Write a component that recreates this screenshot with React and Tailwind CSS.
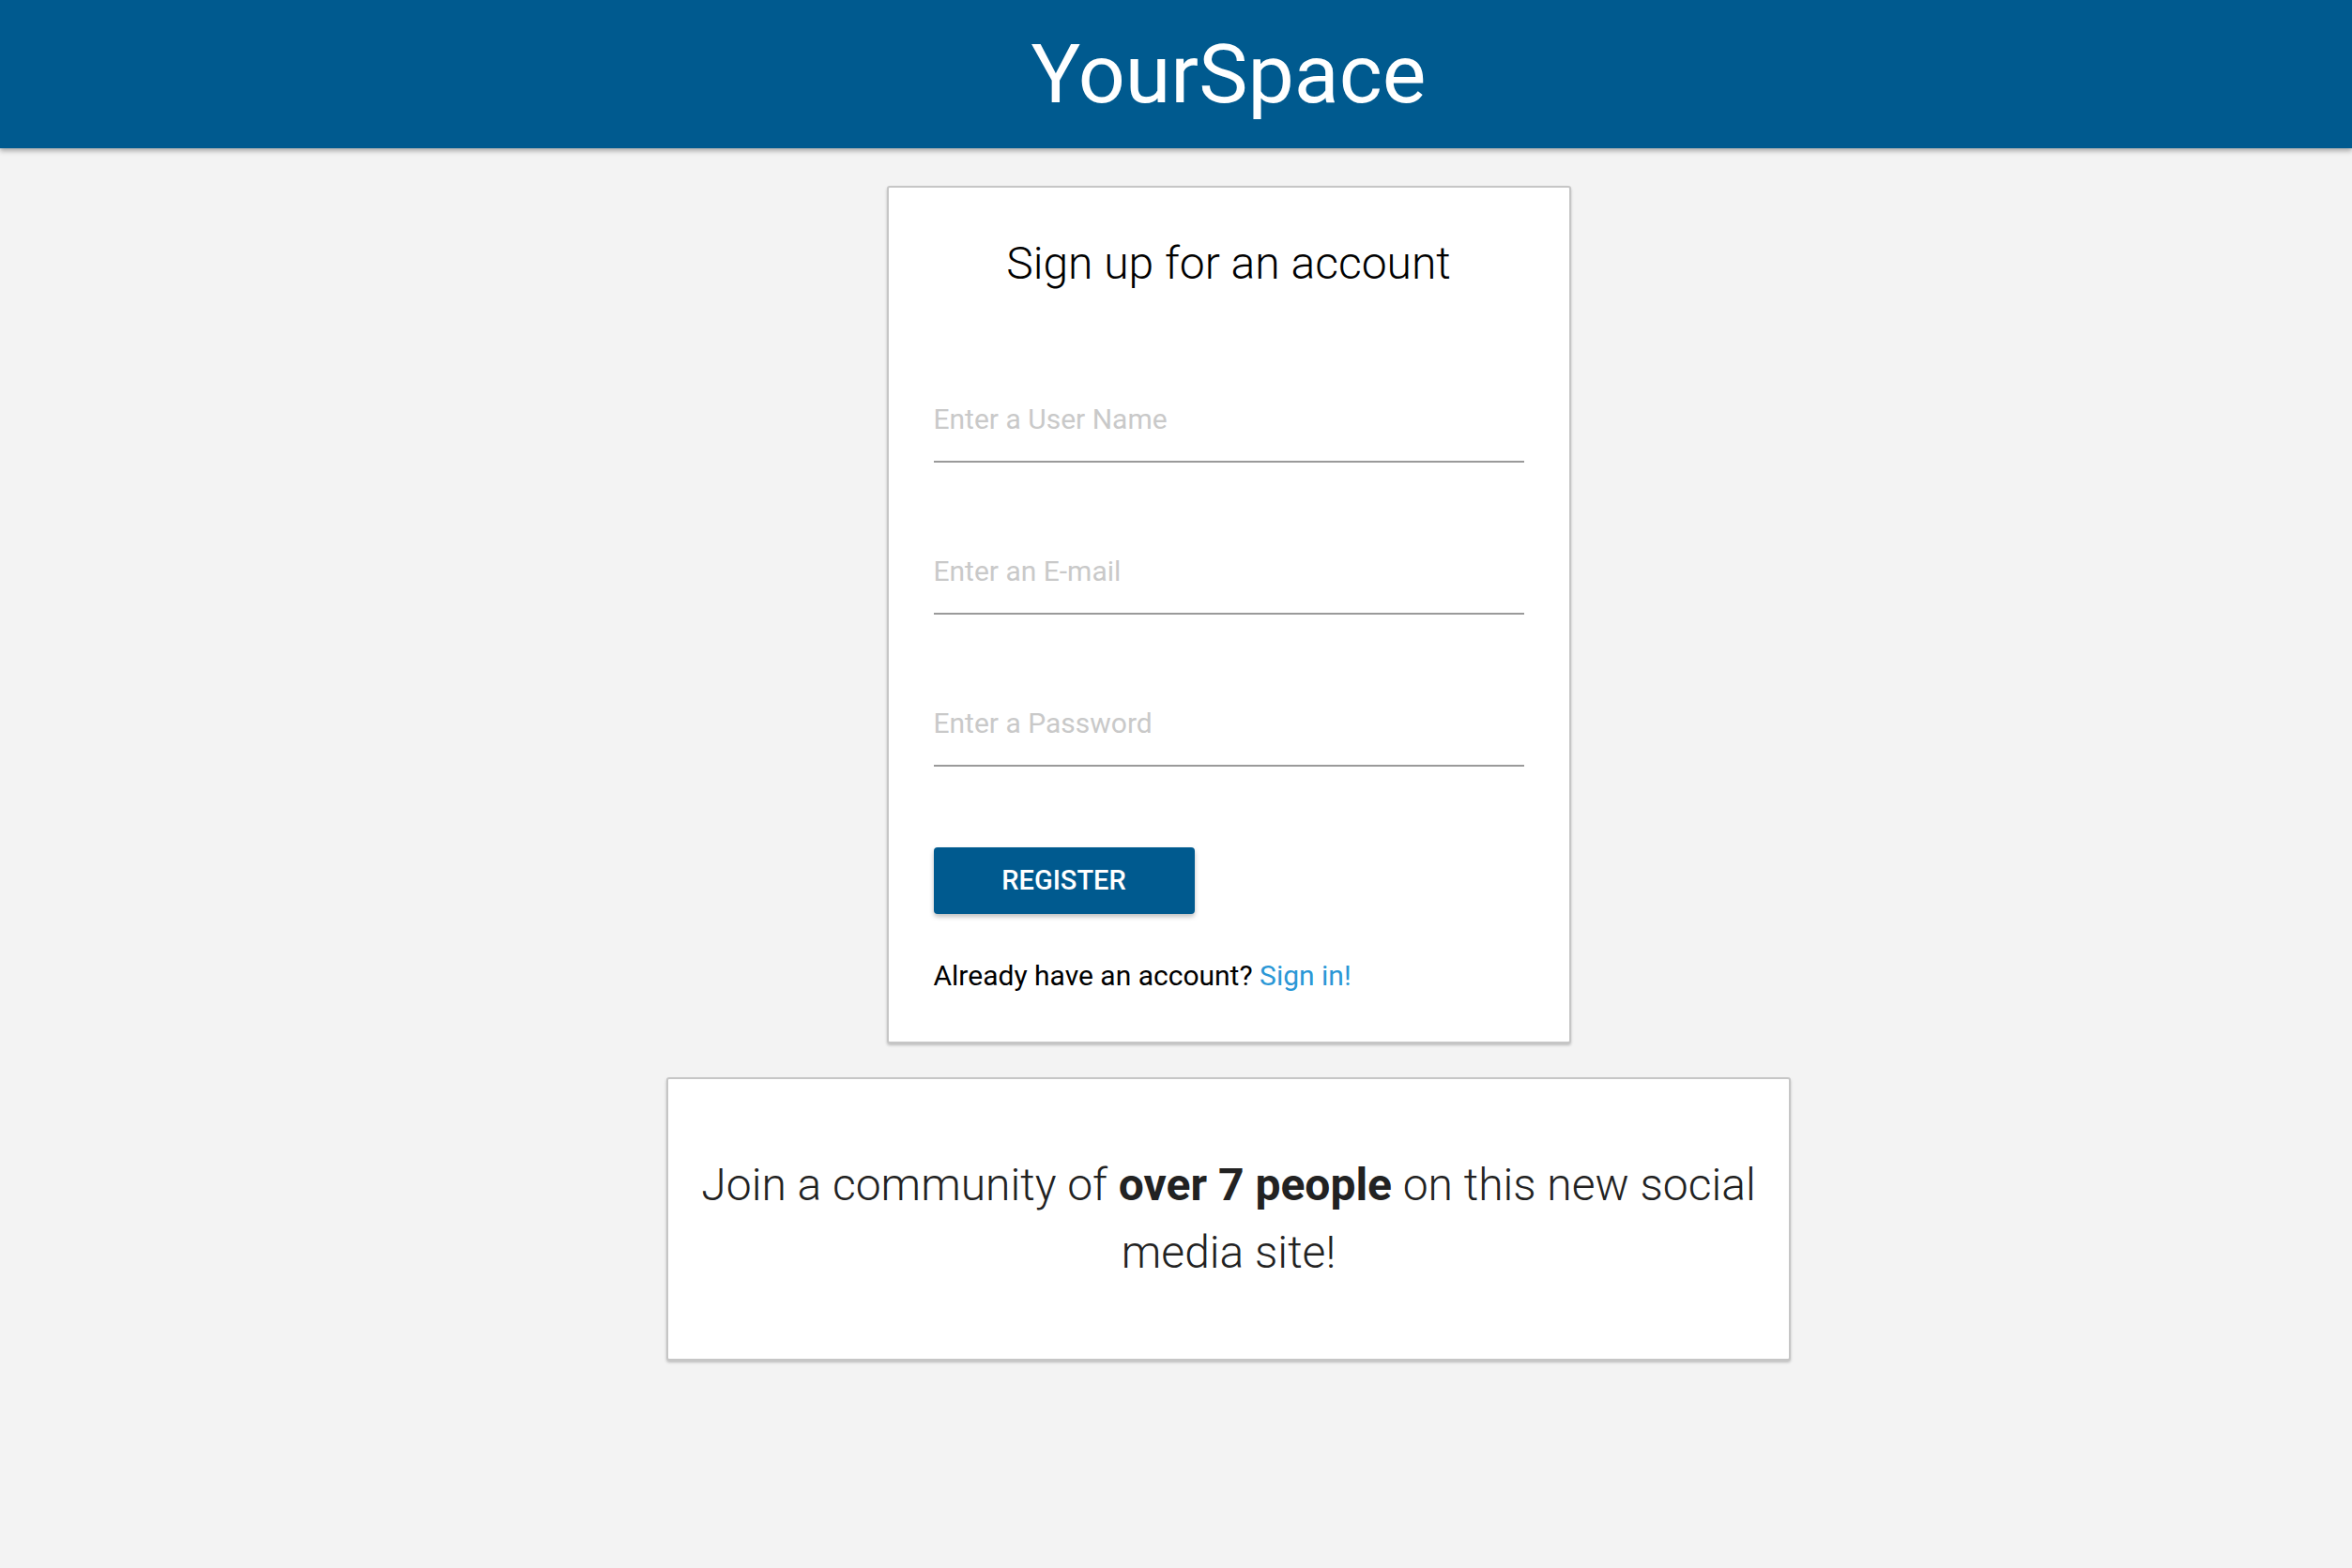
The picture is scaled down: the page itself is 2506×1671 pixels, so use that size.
import React from "react";

const Field = ({ placeholder, type = "text" }) => (
  <input
    type={type}
    placeholder={placeholder}
    className="block w-full h-[92px] bg-transparent border-b-2 border-[#9a9a9a] text-[30px] text-[#222] placeholder:text-[#c9c9c9] outline-none"
  />
);

const App = () => {
  return (
    <div className="min-h-screen bg-[#f3f3f3] font-['Roboto',sans-serif]">
      <header className="relative z-10 h-[158px] bg-[#005a8f] pl-[112px] flex items-center justify-center shadow-[0_3px_5px_rgba(0,0,0,0.3)]">
        <h1 className="text-[88px] leading-none text-white font-normal">YourSpace</h1>
      </header>

      <main className="pl-[112px] pt-[40px] flex flex-col items-center gap-[36px]">
        <div className="w-[729px] bg-white border-2 border-[#c6c6c6] rounded-[3px] shadow-[0_2px_3px_rgba(0,0,0,0.22)] px-[48px] pt-[52px] pb-[50px]">
          <h2 className="text-center text-[48px] leading-[58px] text-black font-light">
            Sign up for an account
          </h2>

          <div className="mt-[91px] flex flex-col gap-[70px]">
            <Field placeholder="Enter a User Name" />
            <Field placeholder="Enter an E-mail" type="email" />
            <Field placeholder="Enter a Password" type="password" />
          </div>

          <button className="mt-[86px] w-[278px] h-[71px] rounded-[4px] bg-[#005a8f] text-white text-[29px] font-medium uppercase shadow-[0_3px_5px_rgba(0,0,0,0.25)]">
            Register
          </button>

          <p className="mt-[46px] text-[30px] leading-[40px] text-black">
            Already have an account?{" "}
            <a href="#" className="text-[#2a97d6]">
              Sign in!
            </a>
          </p>
        </div>

        <div className="w-[1198px] bg-white border-2 border-[#c6c6c6] rounded-[3px] shadow-[0_2px_3px_rgba(0,0,0,0.22)] px-[30px] py-[77px]">
          <p className="text-center text-[48px] leading-[72px] font-light text-[#222]">
            Join a community of <span className="font-bold">over 7 people</span> on this new social media site!
          </p>
        </div>
      </main>
    </div>
  );
};

export default App;
